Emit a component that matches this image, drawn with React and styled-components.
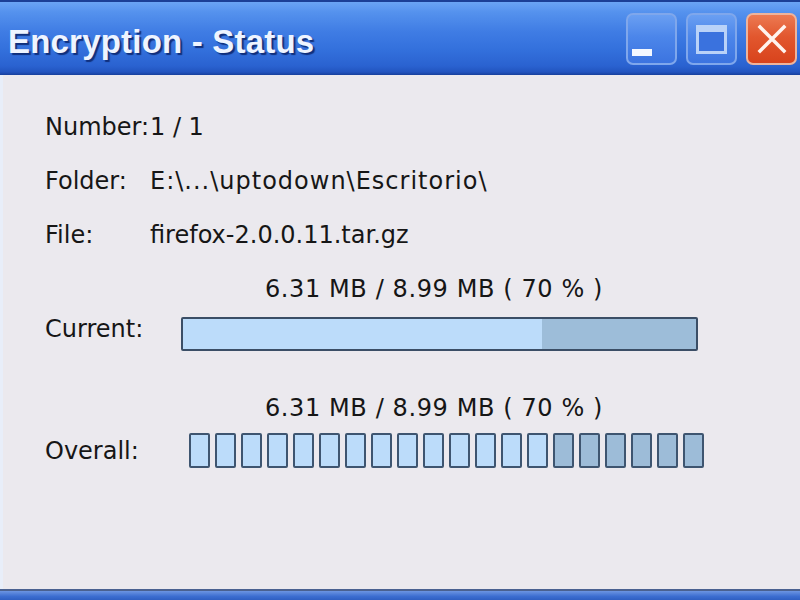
import React from 'react';
import styled, { createGlobalStyle } from 'styled-components';

const GlobalStyle = createGlobalStyle`
  html, body {
    margin: 0;
    padding: 0;
    width: 800px;
    height: 600px;
    overflow: hidden;
    background: #ebe9ee;
  }
`;

const SEGMENTS = 20;
const PERCENT = 70;

export default function App() {
  const filled = Math.round((SEGMENTS * PERCENT) / 100);

  return (
    <>
      <GlobalStyle />
      <Window>
        <TitleBar>
          <Title>Encryption - Status</Title>
          <Controls>
            <CaptionButton type="button" aria-label="Minimize">
              <MinimizeGlyph />
            </CaptionButton>
            <CaptionButton type="button" aria-label="Maximize">
              <MaximizeGlyph />
            </CaptionButton>
            <CaptionButton type="button" aria-label="Close" danger>
              <svg width="30" height="30" viewBox="0 0 30 30">
                <path d="M3 3 L27 27 M27 3 L3 27" stroke="#fff4ee" strokeWidth="3.5" strokeLinecap="square" />
              </svg>
            </CaptionButton>
          </Controls>
        </TitleBar>

        <Body>
          <InfoRow>
            <Label>Number:</Label>
            <Value>1 / 1</Value>
          </InfoRow>
          <InfoRow>
            <Label>Folder:</Label>
            <Value spacing={1}>E:\...\uptodown\Escritorio\</Value>
          </InfoRow>
          <InfoRow>
            <Label>File:</Label>
            <Value>firefox-2.0.0.11.tar.gz</Value>
          </InfoRow>

          <ProgressBlock>
            <Stat>6.31 MB / 8.99 MB ( 70 % )</Stat>
            <BarRow labelLift={5}>
              <Label>Current:</Label>
              <Bar>
                <BarFill style={{ width: `${PERCENT}%` }} />
              </Bar>
            </BarRow>
          </ProgressBlock>

          <ProgressBlock spaced>
            <Stat>6.31 MB / 8.99 MB ( 70 % )</Stat>
            <BarRow tight>
              <Label>Overall:</Label>
              <Segments>
                {Array.from({ length: SEGMENTS }, (_, i) => (
                  <Segment key={i} done={i < filled} />
                ))}
              </Segments>
            </BarRow>
          </ProgressBlock>
        </Body>

        <BottomEdge />
      </Window>
    </>
  );
}

const Window = styled.div`
  display: flex;
  flex-direction: column;
  width: 800px;
  height: 600px;
  font-family: 'DejaVu Sans', 'Liberation Sans', sans-serif;
`;

const TitleBar = styled.div`
  flex: 0 0 75px;
  display: flex;
  align-items: center;
  justify-content: space-between;
  box-sizing: border-box;
  padding: 2px 3px 0 8px;
  border-top: 2px solid #1b3f96;
  background: linear-gradient(
    to bottom,
    #6aa4f4 0px,
    #5592ee 10px,
    #3f7ce4 30px,
    #3370dc 48px,
    #2a62d0 64px,
    #2254bf 70px,
    #173f9c 73px
  );
`;

const Title = styled.h1`
  margin: 4px 0 0;
  font-family: 'Liberation Sans', Arial, sans-serif;
  font-size: 33px;
  font-weight: bold;
  color: #eef4ff;
  text-shadow: 2px 2px 1px #102f7c;
  letter-spacing: 0.2px;
`;

const Controls = styled.div`
  display: flex;
  gap: 9px;
  margin-top: -1px;
`;

const CaptionButton = styled.button`
  display: flex;
  align-items: center;
  justify-content: center;
  box-sizing: border-box;
  width: 51px;
  height: 52px;
  padding: 0;
  border: 2px solid ${(props) => (props.danger ? '#eeb49c' : '#7fa7ec')};
  border-radius: 7px;
  background: ${(props) =>
    props.danger
      ? 'linear-gradient(to bottom, #ec7a52 0%, #e2572e 45%, #d8431c 100%)'
      : 'linear-gradient(to bottom, #6a9ff2 0%, #4c86ea 45%, #3c74e0 100%)'};
  cursor: default;
`;

const MinimizeGlyph = styled.span`
  display: block;
  width: 20px;
  height: 7px;
  margin: 26px 19px 0 0;
  background: #f4f8ff;
`;

const MaximizeGlyph = styled.span`
  display: block;
  box-sizing: border-box;
  width: 31px;
  height: 29px;
  border: 3px solid #b9d2f8;
  border-top-width: 7px;
  background: #3a72de;
`;

const Body = styled.div`
  flex: 1;
  display: flex;
  flex-direction: column;
  padding: 25px 0 0 42px;
  border-left: 3px solid #e8eef9;
  color: #161616;
  font-size: 24px;
`;

const InfoRow = styled.div`
  display: grid;
  grid-template-columns: 105px auto;
  align-items: center;
  height: 54px;
`;

const Label = styled.span`
  white-space: nowrap;
`;

const Value = styled.span`
  white-space: nowrap;
  letter-spacing: ${(props) => props.spacing || 0}px;
`;

const ProgressBlock = styled.div`
  display: flex;
  flex-direction: column;
  margin-top: ${(props) => (props.spaced ? '44px' : '14px')};
`;

const Stat = styled.div`
  box-sizing: border-box;
  width: 652px;
  padding-left: 126px;
  text-align: center;
  line-height: 26px;
  letter-spacing: 0.6px;
`;

const BarRow = styled.div`
  display: grid;
  grid-template-columns: 136px auto;
  align-items: center;
  margin-top: ${(props) => (props.tight ? '12px' : '15px')};

  ${Label} {
    margin-top: -${(props) => (props.labelLift || 0) * 2}px;
  }
`;

const Bar = styled.div`
  box-sizing: border-box;
  width: 517px;
  height: 34px;
  border: 2px solid #3b4e66;
  border-radius: 2px;
  background: #9dbdd9;
  overflow: hidden;
`;

const BarFill = styled.div`
  height: 100%;
  background: #bcdcfa;
`;

const Segments = styled.div`
  display: flex;
  gap: 5px;
  margin-left: 8px;
`;

const Segment = styled.div`
  box-sizing: border-box;
  width: 21px;
  height: 35px;
  border: 2px solid #3e5570;
  border-radius: 2px;
  background: ${(props) => (props.done ? '#bcdcfa' : '#9dbcd8')};
`;

const BottomEdge = styled.div`
  flex: 0 0 9px;
  border-top: 2px solid #4a6190;
  background: linear-gradient(to bottom, #6c95e2 0%, #3c6dd0 60%, #2f5fc2 100%);
`;
